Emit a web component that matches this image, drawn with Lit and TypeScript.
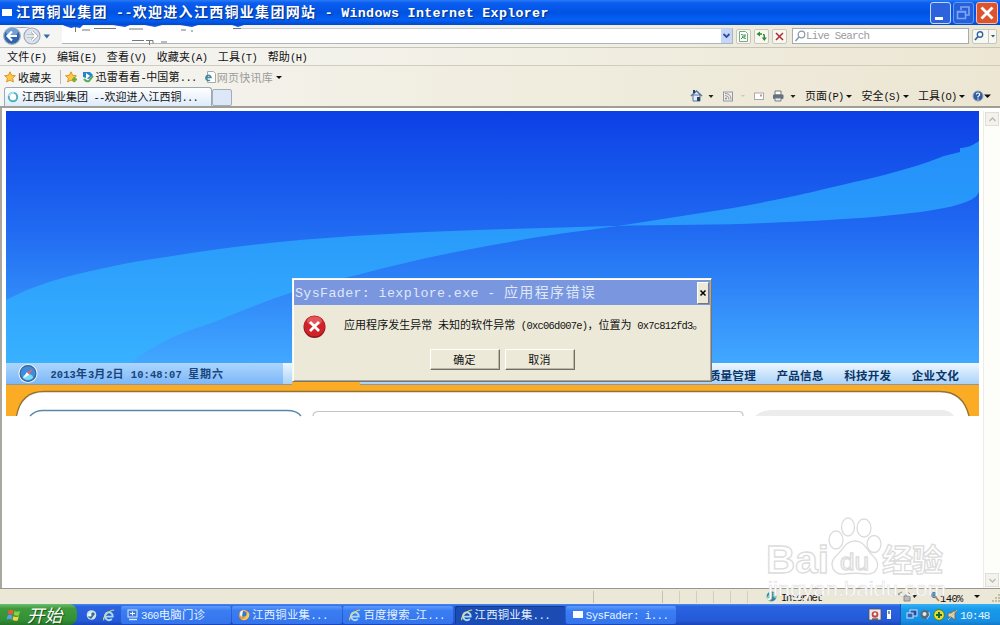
import { LitElement, html, css, svg } from "lit";
import { customElement } from "lit/decorators.js";

// Splits a label into CJK and Latin runs; Latin glyphs are set half as wide as a CJK glyph.
const label = (text: string) =>
  (text.match(/[\x00-\x7f]+|[^\x00-\x7f]+/g) ?? []).map((run) =>
    /^[\x00-\x7f]/.test(run) ? html`<span class="latin">${run}</span>` : run
  );

const icon = (w: number, h: number, body: unknown) =>
  html`<svg class="icon" width=${w} height=${h} viewBox="0 0 ${w} ${h}">${body}</svg>`;

const ieGlyph = svg`
  <path d="M2.6 7.6 H9.7 A3.9 3.9 0 1 0 8.8 9.8" fill="none" stroke="#a9dcff" stroke-width="1.9"/>
  <path d="M.8 11.2 C-.6 8 6.5 1 11.2 1" fill="none" stroke="#e9d56b" stroke-width="1.1"/>`;

const windowGlyph = svg`<rect x="1" y="2" width="10" height="7" fill="#fff"/>`;

const pcGlyph = svg`
  <rect x="1" y="1" width="9" height="7" fill="#3f78d6" stroke="#d8ecff"/>
  <path d="M3 4.500h5M5.500 2.500v4" stroke="#fff"/><path d="M2 10.500h8" stroke="#d8ecff" stroke-width="1.4"/>`;

const foxGlyph = svg`
  <circle cx="6" cy="6" r="5.2" fill="#ef9c2b"/><circle cx="5.2" cy="4.8" r="3.2" fill="#eaf4ff"/>
  <path d="M5 2 A3 3 0 0 1 8.6 5.4 A3.4 3.4 0 0 1 4 7.4 Z" fill="#3478d0"/>
  <path d="M11 4 A5.3 5.3 0 0 1 3 10 C7 10.5 9 8 9.2 3Z" fill="#f8cf56"/>`;

const star = svg`
  <path d="M6 .8 L7.6 4.3 L11.4 4.7 L8.6 7.2 L9.4 11 L6 9.1 L2.6 11 L3.4 7.2 L.6 4.7 L4.4 4.3Z"
    fill="#ffc845" stroke="#d99020" stroke-width=".9"/>`;

const caret = html`<i class="caret"></i>`;

const tasks = [
  { text: "360电脑门诊", glyph: pcGlyph, active: false },
  { text: "江西铜业集...", glyph: foxGlyph, active: false },
  { text: "百度搜索_江...", glyph: ieGlyph, active: false },
  { text: "江西铜业集...", glyph: ieGlyph, active: true },
  { text: "SysFader: i...", glyph: windowGlyph, active: false },
];

const menus = ["文件(F)", "编辑(E)", "查看(V)", "收藏夹(A)", "工具(T)", "帮助(H)"];
const nav = ["质量管理", "产品信息", "科技开发", "企业文化"];
const commands = ["页面(P)", "安全(S)", "工具(O)"];

@customElement("app-root")
export class AppRoot extends LitElement {
  static styles = css`
    :host { display: block; }
    * { box-sizing: border-box; }
    .desktop {
      position: relative; display: flex; flex-direction: column; width: 1000px; height: 625px;
      overflow: hidden; background: #fff; color: #111; --ls: .2px;
      font: 11px/14px "Noto Sans CJK SC", sans-serif; letter-spacing: var(--ls); white-space: nowrap;
    }
    .latin { font-family: "Liberation Mono", monospace; font-size: .95em; letter-spacing: calc(var(--ls) - .0737em); white-space: pre; }
    .icon { display: block; flex: none; overflow: visible; }
    .caret { display: block; flex: none; width: 0; height: 0; border: 3px solid transparent; border-top-color: #111; border-bottom: 0; }

    .titlebar {
      display: flex; align-items: center; height: 25px; flex: none; padding: 0 2px; color: #fff;
      background: linear-gradient(#2a7bf4, #0a5df0 12%, #0053e2 50%, #0560f4 80%, #0049cc);
      --ls: 1.3px; font-size: 14px; font-weight: 700; letter-spacing: var(--ls);
    }
    .titlebar .name { flex: 1; padding-left: 3px; line-height: 24px; text-shadow: 1px 1px 1px #0a2f86; }
    .winbtns { display: flex; gap: 2px; }

    .address { display: flex; align-items: center; height: 23px; flex: none; padding-left: 3px; border-bottom: 1px solid #c5c3ba; background: linear-gradient(90deg, #f5f5f5, #f3f1e8 45%, #ece6d1); }
    .field { display: flex; justify-content: flex-end; width: 671px; height: 16px; margin-left: 11px; background: #fff; border: 1px solid #a9b6bd; border-left: 0; border-top-color: #c9d0d4; }
    .drop { display: flex; align-items: center; justify-content: center; width: 11px; background: #c6d6fa; }
    .tool { display: flex; align-items: center; justify-content: center; width: 15px; height: 15px; margin-left: 3px; background: #f8f7f0; border: 1px solid #c4c8c4; border-radius: 2px; }
    .search { display: flex; align-items: center; width: 177px; height: 16px; margin-left: 5px; padding-left: 1px; background: #fff; border: 1px solid #a3adb5; color: #9a9a9a; --ls: .05px; font-size: 11.4px; }
    .go { width: 25px; justify-content: space-around; }

    .menubar { display: flex; align-items: center; gap: 10.4px; height: 18px; flex: none; padding-left: 7px; border-bottom: 1px solid #cfccc0; background: linear-gradient(90deg, #f4f4f4, #f2f0e6 45%, #ece6d3); }
    .lower { display: flex; flex-direction: column; height: 42px; flex: none; background: linear-gradient(90deg, #f5f5f4, #f1eee1 45%, #ece6d3); border-bottom: 2px solid #9f9f98; }
    .favorites { display: flex; align-items: center; height: 21px; padding: 1px 0 0 4px; }
    .sep { width: 1px; height: 14px; margin: 0 4px 0 8px; background: #bbb; }
    .faint { margin-right: 3px; color: #9c9c9c; }
    .tabs { display: flex; align-items: flex-end; height: 19px; }
    .tab { display: flex; align-items: center; gap: 3px; width: 208px; height: 19px; margin-left: 4px; padding-left: 2px; border: 1px solid #9fa9b3; border-bottom: 0; border-radius: 3px 3px 0 0; background: linear-gradient(#fff, #dcebfb); --ls: 0px; letter-spacing: 0; }
    .newtab { width: 20px; height: 17px; border: 1px solid #a3adb8; border-radius: 2px; background: #dce8f8; }
    .commands { display: flex; align-items: center; align-self: center; margin-left: auto; width: 309px; padding-bottom: 1px; --ls: 0px; letter-spacing: 0; }
    .command { display: flex; align-items: center; gap: 3px; margin-right: 9px; }

    .view { display: flex; height: 481px; flex: none; padding: 3px 0 0 6px; border-bottom: 1px solid #98968e; box-shadow: inset 2px 0 #aaa79f; background: #fff; }
    .page { width: 973px; }
    .banner { display: block; }
    .strip { display: flex; height: 22px; border-bottom: 1px solid #8c99a0; background: linear-gradient(#eef7ff, #a9d2f8); color: #0b3568; font-weight: 700; }
    .date { display: flex; align-items: center; width: 277px; padding-left: 12px; background: linear-gradient(#add5fc, #7cb8f8); color: #17457c; --ls: .88px; letter-spacing: var(--ls); }
    .when { padding-left: 12.500px; }
    .links { display: flex; align-items: center; justify-content: flex-end; gap: 20.500px; flex: 1; padding: 2px 20px 0 0; font-size: 11.6px; }
    .body { display: block; overflow: visible; }
    .scroll { display: flex; flex-direction: column; justify-content: space-between; width: 17px; margin-left: 4px; border-left: 1px solid #eeede5; background: #fdfdfa; }
    .arrow { display: flex; align-items: center; justify-content: center; height: 14px; margin: 1px; background: #f3f2ec; border: 1px solid #e0ded5; }

    .status { display: flex; align-items: center; height: 15px; flex: none; background: #ece8d8; }
    .status > * { flex: none; }
    .first { width: 594px; height: 12px; border-right: 1px solid #c3bfae; }
    .second { width: 69px; height: 12px; border-right: 1px solid #c3bfae; }
    .cell { width: 17px; height: 12px; border-right: 1px solid #d2cebe; }
    .zone { display: flex; gap: 4px; width: 131px; margin-left: 18px; align-items: center; --ls: -.4px; }
    .zoom { display: flex; align-items: center; width: 95px; }
    .percent { padding: 3px 11px 0 0; }

    .taskbar { display: flex; align-items: stretch; height: 21px; flex: none; background: linear-gradient(#4a8af0, #2a63e0 12%, #2459d8 80%, #1a45b4); color: #e6f3ff; }
    .start { display: flex; align-items: center; gap: 6px; width: 77px; padding-left: 7px; border-radius: 0 8px 8px 0; background: linear-gradient(#6fbd6c, #3d9a3d 22%, #349034 75%, #26732a); font-size: 17.500px; font-style: italic; color: #fff; text-shadow: 1px 1px 1px #1e4f1e; line-height: 20px; }
    .quick { display: flex; align-items: center; gap: 6px; width: 44px; padding-left: 9px; }
    .task { display: flex; align-items: center; gap: 2px; width: 110px; margin: 2px 1.200px 1px 0; padding-left: 6px; border-radius: 2px; background: linear-gradient(#5c9bfc, #3b7df2 25%, #3474ec); font-size: 11.400px; }
    .active { background: #1b4cb4; box-shadow: inset 1px 1px #123a8e; }
    .pretray { display: flex; align-items: center; gap: 6px; margin-left: auto; padding-right: 9px; }
    .tray { display: flex; align-items: center; gap: 2px; width: 100px; padding-left: 6px; background: linear-gradient(#34b1f6, #189bea 25%, #168fe4 80%, #1278c6); border-left: 1px solid #0f5bb0; }
    .clock { --ls: -.1px; font-size: 12px; }

    .dialog { position: absolute; left: 292px; top: 278px; width: 420px; height: 104px; padding: 1px; background: #ece9d8; border: 1px solid; border-color: #f4f4ec #78776f #78776f #f4f4ec; box-shadow: inset 1px 1px #fff, inset -1px -1px #aaa89a; }
    .dtitle { display: flex; align-items: center; justify-content: space-between; height: 25px; padding: 0 1px; background: #7a96df; color: #dfe8f8; font-size: 14px; --ls: 1.360px; letter-spacing: var(--ls); }
    .dclose { display: flex; align-items: center; justify-content: center; width: 12px; height: 22px; background: #ece9d8; border: 1px solid; border-color: #fff #777 #777 #fff; }
    .message { display: flex; align-items: center; gap: 18px; height: 42px; padding-left: 9px; --ls: .05px; letter-spacing: var(--ls); }
    .message .text { padding-bottom: 2px; }
    .buttons { display: flex; justify-content: center; gap: 5px; padding-top: 2px; }
    .button { width: 70px; height: 21px; line-height: 19px; text-align: center; border: 1px solid; border-color: #fff #716f64 #716f64 #fff; box-shadow: inset -1px -1px #bbb8a7; }
    .overlay { position: absolute; left: 0; top: 0; pointer-events: none; letter-spacing: 0; }
    .brand { font: 700 39.500px "Liberation Sans", sans-serif; }
    .brand-cjk { font: 700 31px "Noto Sans CJK SC", sans-serif; }
    .du { font: 24px "Liberation Sans", sans-serif; }
    .site { font: 20.500px "Liberation Sans", sans-serif; }
  `;

  private titlebar() {
    return html`<div class="titlebar">
      ${icon(11, 10, svg`<rect x="0" y="1" width="10" height="7" fill="#fff"/>`)}
      <div class="name">${label("江西铜业集团 --欢迎进入江西铜业集团网站 - Windows Internet Explorer")}</div>
      <div class="winbtns">
        ${icon(21, 22, svg`<rect x=".5" y=".5" width="20" height="21" rx="2.500" fill="#2c62dc" stroke="#c4d8fb"/><rect x="5" y="15" width="8" height="3" fill="#fff"/>`)}
        ${icon(21, 22, svg`<rect x=".5" y=".5" width="20" height="21" rx="2.500" fill="#2460dc" stroke="#6c98ee"/><path d="M8 8V5h8v8h-3M4.500 9.500h8v7h-8zM4 10h9" fill="none" stroke="#7fa5f2" stroke-width="1.6"/>`)}
        ${icon(22, 22, svg`<rect x=".5" y=".5" width="21" height="21" rx="2.500" fill="#dc5330" stroke="#f4c0b0"/><path d="M5.500 5.500l11 11M16.500 5.500l-11 11" stroke="#fff" stroke-width="2.800"/>`)}
      </div>
    </div>`;
  }

  private address() {
    return html`<div class="address">
      ${icon(48, 20, svg`
        <path d="M9 1H28Q20 3 9 1" fill="#9aa6b5"/>
        <circle cx="9" cy="10" r="8.300" fill="#2f65ad" stroke="#9caabd" stroke-width="1.200"/>
        <ellipse cx="9" cy="6" rx="6" ry="4" fill="#83aee0" opacity=".8"/>
        <path d="M14 10H5M9 5.500L4.500 10L9 14.500" fill="none" stroke="#fff" stroke-width="2.200"/>
        <circle cx="29" cy="10" r="8" fill="#dde3eb" stroke="#9caabd" stroke-width="1.200"/>
        <path d="M24 10h9M29 5.500l4.500 4.500l-4.500 4.500" fill="none" stroke="#9ba4b0" stroke-width="3"/><path d="M24 10h9M29 5.500l4.500 4.500l-4.500 4.500" fill="none" stroke="#fff" stroke-width="1.700"/>
        <path d="M40.500 8.500h6.500l-3.200 4z" fill="#3569a3"/>`)}
      <div class="field"><div class="drop">${icon(7, 6, svg`<path d="M.5 1L3.500 4L6.500 1" fill="none" stroke="#33508e" stroke-width="1.800"/>`)}</div></div>
      <div class="tool">${icon(11, 11, svg`<path d="M1.500 .5h6l2 2v8h-8z" fill="#fff" stroke="#78a980"/><path d="M3 3.500q2.500 0 4 2M8 7.500q-2.500 0-4-2M7 3v3H4M3 8l2-2" fill="none" stroke="#3f9951"/>`)}</div>
      <div class="tool">${icon(11, 11, svg`<path d="M4 .5v5L.5 3zM5.800 6.500h5L8.300 10z" fill="#2b8b35"/><path d="M3.500 3H6M8.300 7V4.500Q8.300 3.500 7 3.500" fill="none" stroke="#2b8b35" stroke-width="1.400"/>`)}</div>
      <div class="tool">${icon(9, 9, svg`<path d="M1 1l7 7M8 1L1 8" stroke="#b02c32" stroke-width="1.500"/>`)}</div>
      <div class="search">${icon(12, 12, svg`<circle cx="7.500" cy="4.500" r="3.300" fill="none" stroke="#8898ac" stroke-width="1.200"/><path d="M5 7L1.500 11" stroke="#8898ac" stroke-width="1.500"/>`)}${label("Live Search")}</div>
      <div class="tool go">${icon(10, 10, svg`<circle cx="6" cy="3.500" r="2.700" fill="#fff" stroke="#2d66a5" stroke-width="1.400"/><path d="M4 5.500L1 9" stroke="#2d66a5" stroke-width="1.800"/>`)}<svg class="icon" width="8" height="14"><path d="M1.500 0v14" stroke="#c4c8c4"/><path d="M4 6h4L6 8.500z" fill="#2d5580"/></svg></div>
    </div>`;
  }

  private lower() {
    return html`<div class="lower">
      <div class="favorites">
        ${icon(14, 12, star)}<span>收藏夹</span><i class="sep"></i>
        ${icon(17, 12, svg`${star}<path d="M7 8.500h5M9.500 6v5" stroke="#6cae35" stroke-width="2"/>`)}
        ${icon(14, 12, svg`<path d="M1 1h7l3 3-4 4-6-2z" fill="#2b83c8"/><path d="M4 2l4 3-4 3z" fill="#fff"/><path d="M2 8q2 3 5 2l4-5" fill="none" stroke="#53ad55" stroke-width="2"/>`)}
        <span>${label("迅雷看看-中国第...")}</span>
        <svg class="icon" width="20" height="12"><path d="M10.500 .5h6l2 2v9h-8z" fill="#fff" stroke="#a8aaa5"/><path d="M9 6.500h5a2.600 2.600 0 1 0-1 2.500" fill="none" stroke="#398aa5" stroke-width="1.500"/></svg>
        <span class="faint">网页快讯库</span>${caret}
      </div>
      <div class="tabs">
        <div class="tab">${icon(12, 12, svg`<circle cx="6" cy="6" r="4.200" fill="#fff" stroke="#51b1bf" stroke-width="2"/><path d="M2 5A4.200 4.200 0 0 1 7 2" fill="none" stroke="#b6e4e9" stroke-width="2"/>`)}<span>${label("江西铜业集团 --欢迎进入江西铜...")}</span></div>
        <div class="newtab"></div>
        <div class="commands">
          ${icon(114, 12, svg`
            <path d="M0 6L5.500 1L11 6" fill="none" stroke="#5277a2" stroke-width="1.600"/><path d="M2 5h7v6H2z" fill="#e5edf7" stroke="#5277a2"/><path d="M6 7h3v4H6z" fill="#24466f"/><path d="M2 0h2v3H2z" fill="#223f78"/>
            <path d="M17.500 5h5L20 8z" fill="#222"/>
            <rect x="32.500" y="2" width="9" height="9" fill="#eee" stroke="#999"/><path d="M34 5.500q4 0 4 4M34 3.500q6 0 6 6" fill="none" stroke="#999"/><circle cx="35" cy="8.500" r="1" fill="#888"/>
            <path d="M50 5h4l-2 2z" fill="#c6c6c6"/>
            <rect x="63.500" y="3" width="9" height="6.500" fill="#fff" stroke="#aaa"/><path d="M69 4.500h2v2h-2z" fill="#d58b8b"/>
            <path d="M84 1h6v4h-6z" fill="#fff" stroke="#777"/><rect x="82" y="4.500" width="10.500" height="4.500" rx="1" fill="#65707a"/><path d="M84 8h6v3h-6z" fill="#e5ecf3" stroke="#76828e"/>
            <path d="M99.500 5h5L102 8z" fill="#222"/>`)}
          ${commands.map((c) => html`<div class="command"><span>${label(c)}</span>${caret}</div>`)}
          <svg class="icon" width="20" height="12"><circle cx="4" cy="6" r="5" fill="#315c9f" stroke="#8da2c2"/><path d="M2.300 4.500q0-1.500 1.700-1.500t1.700 1.500q0 1-1.700 2v1M4 8.500v1.200" fill="none" stroke="#fff" stroke-width="1.200"/><path d="M10 4.500h7L13.500 8z" fill="#111"/></svg>
        </div>
      </div>
    </div>`;
  }

  private page() {
    return html`<div class="view">
      <div class="page">
        <svg class="banner" width="973" height="252" viewBox="0 0 973 252">
          <defs>
            <linearGradient id="sky" x1="0" y1="0" x2="0" y2="1"><stop offset="0" stop-color="#0c40e6"/><stop offset=".45" stop-color="#1f68f1"/><stop offset="1" stop-color="#41a8ff"/></linearGradient>
            <linearGradient id="wave" gradientUnits="userSpaceOnUse" x1="0" y1="30" x2="0" y2="252"><stop offset="0" stop-color="#2490fa"/><stop offset=".45" stop-color="#2a9cfb"/><stop offset="1" stop-color="#38b1ff"/></linearGradient>
          </defs>
          <rect width="973" height="252" fill="url(#sky)"/>
          <path fill="url(#wave)" d="M0 189C28 174 60 165 94 158C115 153 138 149 160 146C204 139 249 133 294 129C365 123 435 120 504 118L606 115C665 114 715 114 759 112C805 110 850 108 887 104C930 100 972 93 973 80V30C966 35 960 37 954 37V41L938 45L922 51C890 62 857 69 823 77C795 84 760 91 727 97L612 115C575 120 540 124 504 131C450 140 400 151 351 164C328 169 306 175 284 182C259 190 235 200 211 210C194 216 177 221 161 229Q139 240 124 252H0Z"/>
        </svg>
        <div class="strip">
          <div class="date">
            ${icon(20, 20, svg`<circle cx="10" cy="9.500" r="9.600" fill="#e6f4ff"/><circle cx="10" cy="9.500" r="7.900" fill="#3d8cde" stroke="#37608f" stroke-width="1.200"/><ellipse cx="10" cy="13" rx="5" ry="3" fill="#7bdcf8"/><path d="M15 4.500L11.300 10.800L8.700 8.200Z" fill="#e26a6a"/><path d="M5 14.500L11.300 10.800L8.700 8.200Z" fill="#fff"/>`)}
            <span class="when">${label("2013年3月2日 10:48:07 星期六")}</span>
          </div>
          <div class="links">${nav.map((n) => html`<span>${n}</span>`)}</div>
        </div>
        <svg class="body" width="973" height="31" viewBox="0 0 973 31">
          <rect width="973" height="31" fill="#fcab25"/>
          <rect x="286" y="-3" width="68" height="4" fill="#fcab25"/>
          <path d="M10.500 31Q15 6.500 38 6.500H934Q957 6.500 963 31" fill="#fff" stroke="#927235" stroke-width="1.300"/>
          <path d="M24 31Q29 25.500 37 25.500H281Q291 25.500 295 31" fill="none" stroke="#5c86a8" stroke-width="1.300"/>
          <path d="M307 31Q307 26.500 313 26.500H733Q737 26.500 737 31" fill="none" stroke="#c5c5c9" stroke-width="1.200"/>
          <path d="M749 31Q756 25 766 25H936Q944 25 948 31Z" fill="#ececec"/>
        </svg>
      </div>
      <div class="scroll">
        <div class="arrow">${icon(7, 5, svg`<path d="M.5 4L3.500 1L6.500 4" fill="none" stroke="#bbb9ae" stroke-width="1.300"/>`)}</div>
        <div class="arrow">${icon(7, 5, svg`<path d="M.5 1L3.500 4L6.500 1" fill="none" stroke="#bbb9ae" stroke-width="1.300"/>`)}</div>
      </div>
    </div>`;
  }

  private status() {
    return html`<div class="status">
      <i class="first"></i><i class="second"></i><i class="cell"></i><i class="cell"></i><i class="cell"></i><i class="cell"></i><i class="cell"></i>
      <div class="zone">${icon(11, 11, svg`<circle cx="5.500" cy="5.500" r="4.900" fill="#2e86a8"/><path d="M3 1q3 2 0 4t1 5M7 2q2 1 1 3l2 2" fill="none" stroke="#8fd392" stroke-width="1.700"/>`)}<span>${label("Internet")}</span></div>
      <div class="zoom">
        ${icon(43, 11, svg`<path d="M1 3l4-2M1 3l4 2M9 5V3q2-3 4 0v2" fill="none" stroke="#888"/><path d="M7 5h6v5H7z" fill="#bbb" stroke="#888"/><path d="M15 4h5l-2.500 3z" fill="#222"/><circle cx="37" cy="4" r="2.500" fill="#e5f2ff" stroke="#3a6f9d"/><path d="M37 1.500v5M34.500 4h5" stroke="#28609d"/><path d="M38.500 6l3.500 4" stroke="#b6834b" stroke-width="1.800"/>`)}
        <span class="percent">${label("140%")}</span>${caret}
      </div>
      ${icon(8, 10, svg`<path d="M6 2h2v2H6zM3 5h2v2H3zM6 5h2v2H6zM0 8h2v2H0zM3 8h2v2H3zM6 8h2v2H6z" fill="#c2bda9"/>`)}
    </div>`;
  }

  private taskbar() {
    return html`<div class="taskbar">
      <div class="start">${icon(14, 14, svg`<path d="M1.500 2.500Q4 .8 6.500 2.500L5.700 6.500Q3.500 5 .8 6.500z" fill="#ee5b33"/><path d="M7.500 3Q10 4.500 13 3L12 7.300Q9.500 8.500 6.700 7z" fill="#8bd04a"/><path d="M.5 7.700Q3 6 5.500 7.700L4.700 11.500Q2.500 10-.3 11.500z" fill="#5d9cf5"/><path d="M6.400 8.200Q9 9.600 11.700 8.300L10.800 12.300Q8.500 13.500 5.600 12z" fill="#fbd442"/>`)}<span>开始</span></div>
      <div class="quick">${icon(11, 12, svg`<circle cx="5.500" cy="6" r="4.800" fill="#cfe5ee"/><path d="M2 8l5-5 2 2-4 5z" fill="#3b6e94"/><circle cx="4" cy="6" r="1.500" fill="#fff"/>`)}${icon(12, 12, ieGlyph)}</div>
      ${tasks.map((t) => html`<div class="task ${t.active ? "active" : ""}">${icon(12, 12, t.glyph)}<span>${label(t.text)}</span></div>`)}
      <div class="pretray">
        ${icon(12, 12, svg`<rect width="12" height="11" fill="#f0e8e8" stroke="#555" stroke-width=".8"/><circle cx="6" cy="5.500" r="3.300" fill="#c74545"/><circle cx="6" cy="5" r="1.500" fill="#fff"/><path d="M3 10h6" stroke="#222"/>`)}
        ${icon(4, 10, svg`<rect width="4" height="9" fill="#fff"/><path d="M2 1v3" stroke="#123"/>`)}
      </div>
      <div class="tray">
        ${icon(11, 12, svg`<rect x="3" y="1" width="7" height="6" fill="#284da4" stroke="#c6e4fa"/><rect x="0" y="4" width="6" height="5" fill="#3263bb" stroke="#c6e4fa"/>`)}
        ${icon(11, 12, svg`<circle cx="5" cy="5.500" r="4.600" fill="#596977"/><circle cx="4.500" cy="5" r="2" fill="#dfe8ef"/><path d="M9 3q2 3-2 7" fill="none" stroke="#b3dcf8"/>`)}
        ${icon(12, 12, svg`<circle cx="6" cy="6" r="5.400" fill="#ecd92e" stroke="#338043"/><path d="M6 3v6M3 6h6" stroke="#176b2c" stroke-width="2"/>`)}
        ${icon(11, 12, svg`<path d="M1 4h3l4-3v10L4 8H1z" fill="#d9d6c0" stroke="#6b6b66"/><path d="M1 11L10 1" stroke="#e5b64b"/>`)}
        <span class="clock">${label("10:48")}</span>
      </div>
    </div>`;
  }

  private dialog() {
    return html`<div class="dialog">
      <div class="dtitle"><span>${label("SysFader: iexplore.exe - 应用程序错误")}</span><div class="dclose">${icon(6, 6, svg`<path d="M.5 .5l5 5M5.500 .5l-5 5" stroke="#000" stroke-width="1.500"/>`)}</div></div>
      <div class="message">
        ${icon(23, 23, svg`<circle cx="11.500" cy="12" r="11" fill="#8e151b"/><circle cx="11.500" cy="11" r="10.500" fill="#d1222a"/><ellipse cx="11.500" cy="6" rx="7.500" ry="4.500" fill="#e77476" opacity=".65"/><path d="M7 7l9 9M16 7l-9 9" stroke="#fff" stroke-width="2.800"/>`)}
        <span class="text">${label("应用程序发生异常 未知的软件异常 (0xc06d007e)，位置为 0x7c812fd3。")}</span>
      </div>
      <div class="buttons"><div class="button">确定</div><div class="button">取消</div></div>
    </div>`;
  }

  // Smudges over the address field and the site watermark.
  private overlay() {
    return html`<svg class="overlay" width="1000" height="625" viewBox="0 0 1000 625">
      <path d="M62 26H240V33H151L148 41H132L126 35H62Z" fill="#fff"/>
      <path d="M63 25h20l-3 3-5-1-4 1-6-2zM113 25h17l-5 2zM145 25h17l-7 2zM180 25h18l-6 2zM232 25h12l-6 2z" fill="#0c55df"/>
      <path d="M75.500 27v5M82 30h8M94 28.500h22M129 29h14M181 30h5M191 31h2M233 28.500h8M132 40.500h12M146 40.500h7v3M149.500 41v4M161 42h6" fill="none" stroke="#777" stroke-width="1"/>
      <g fill="#fff" fill-opacity=".75" stroke="#dcdcdc" stroke-width="1.300">
        <ellipse cx="836" cy="540" rx="7" ry="9"/><ellipse cx="848" cy="527" rx="6.500" ry="9"/><ellipse cx="864" cy="528" rx="7" ry="9"/><ellipse cx="874" cy="544" rx="7" ry="8.500"/>
        <path d="M855 541C845 541 843 550 836 556C828 564 833 575 844 574C852 573 859 573 866 574C878 575 881 563 873 556C866 550 865 541 855 541Z"/>
        <text class="brand" x="766" y="573" textLength="63" lengthAdjust="spacingAndGlyphs">Bai</text>
        <text class="du" x="840" y="570" textLength="29" lengthAdjust="spacingAndGlyphs">du</text>
        <text class="brand-cjk" x="882" y="571" textLength="61">经验</text>
      </g>
      <text class="site" x="768" y="596" textLength="178" lengthAdjust="spacingAndGlyphs" fill="#fff" stroke="#ddd" stroke-width=".5">jingyan.baidu.com</text>
    </svg>`;
  }

  render() {
    return html`<div class="desktop">${this.titlebar()}${this.address()}<div class="menubar">${menus.map((m) => html`<span>${label(m)}</span>`)}</div>${this.lower()}${this.page()}${this.status()}${this.taskbar()}${this.dialog()}${this.overlay()}</div>`;
  }
}
